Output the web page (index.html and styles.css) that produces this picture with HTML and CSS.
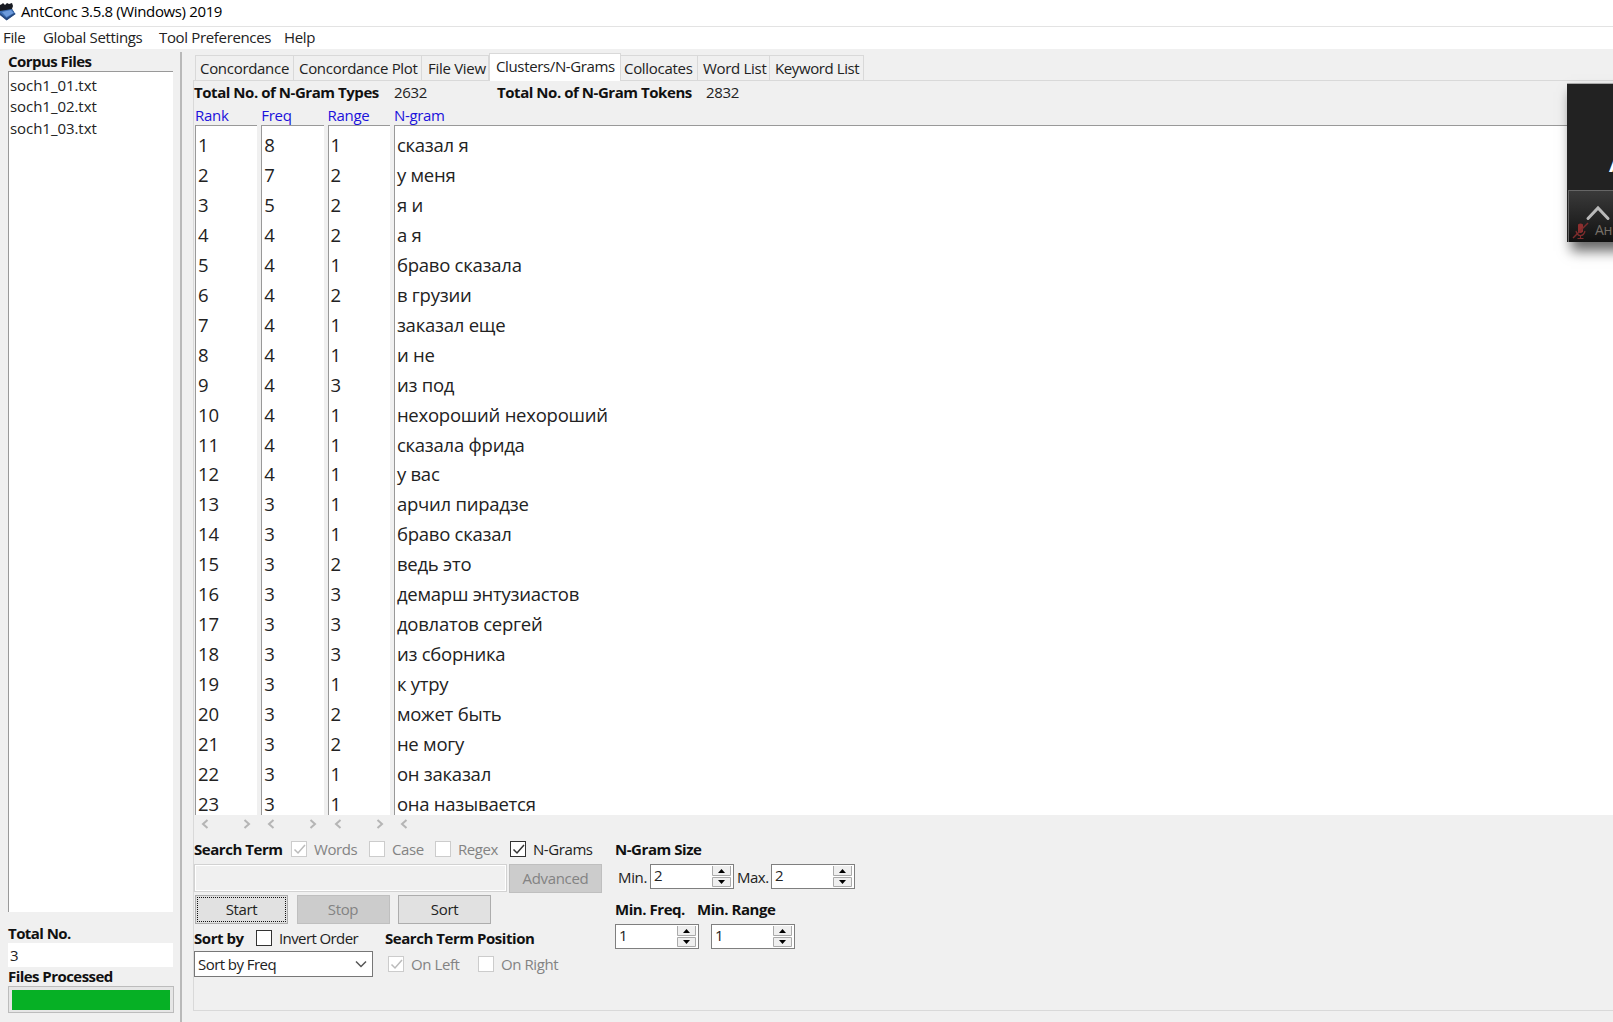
FILE: index.html
```
<!DOCTYPE html>
<html lang="en">
<head>
<meta charset="utf-8">
<title>AntConc 3.5.8 (Windows) 2019</title>
<link rel="stylesheet" href="styles.css">
</head>
<body>
<header class="titlebar">
  <svg class="app-icon" width="17" height="21" viewBox="0 0 17 21">
    <path d="M0 5l2-1 1-1 2 2 2-2 2 1 3-1 1 3-1 3 2 3-6 5L0 14z" fill="#181b22"/>
    <path d="M0 11l12-2 3.500 5-8.500 6L0 15z" fill="#3d6fb5"/>
    <path d="M2 12l9-2 2.500 3-7 4z" fill="#6d9bdc"/>
    <path d="M0 15l6.500 5.500 9-6.500-1-1-8 5L0 13z" fill="#27497f"/>
  </svg>
  <span class="title">AntConc 3.5.8 (Windows) 2019</span>
</header>
<nav class="menubar"><span class="m1">File</span><span class="m2">Global Settings</span><span class="m3">Tool Preferences</span><span class="m4">Help</span></nav>
<div class="workspace">
  <aside class="sidebar">
    <b class="label">Corpus Files</b>
    <div class="files"><span>soch1_01.txt</span><span>soch1_02.txt</span><span>soch1_03.txt</span></div>
    <b class="label total">Total No.</b>
    <div class="count">3</div>
    <b class="label processed">Files Processed</b>
    <div class="progress"><div class="bar"></div></div>
  </aside>
  <main class="main">
    <div class="tabs">
      <div class="tab t1">Concordance</div><div class="tab t2">Concordance Plot</div><div class="tab t3">File View</div><div class="tab active">Clusters/N-Grams</div><div class="tab t5">Collocates</div><div class="tab t6">Word List</div><div class="tab t7">Keyword List</div>
    </div>
    <section class="pane">
      <div class="stats"><b class="types">Total No. of N-Gram Types</b><span class="num">2632</span><b class="tokens">Total No. of N-Gram Tokens</b><span>2832</span></div>
      <div class="table">
        <div class="col"><div class="head">Rank</div><div class="list num-list"><span>1</span><span>2</span><span>3</span><span>4</span><span>5</span><span>6</span><span>7</span><span>8</span><span>9</span><span>10</span><span>11</span><span>12</span><span>13</span><span>14</span><span>15</span><span>16</span><span>17</span><span>18</span><span>19</span><span>20</span><span>21</span><span>22</span><span>23</span></div></div>
        <div class="col"><div class="head">Freq</div><div class="list num-list"><span>8</span><span>7</span><span>5</span><span>4</span><span>4</span><span>4</span><span>4</span><span>4</span><span>4</span><span>4</span><span>4</span><span>4</span><span>3</span><span>3</span><span>3</span><span>3</span><span>3</span><span>3</span><span>3</span><span>3</span><span>3</span><span>3</span><span>3</span></div></div>
        <div class="col"><div class="head">Range</div><div class="list num-list"><span>1</span><span>2</span><span>2</span><span>2</span><span>1</span><span>2</span><span>1</span><span>1</span><span>3</span><span>1</span><span>1</span><span>1</span><span>1</span><span>1</span><span>2</span><span>3</span><span>3</span><span>3</span><span>1</span><span>2</span><span>2</span><span>1</span><span>1</span></div></div>
        <div class="col wide"><div class="head">N-gram</div><div class="list" lang="ru"><span>сказал я</span><span>у меня</span><span>я и</span><span>а я</span><span>браво сказала</span><span>в грузии</span><span>заказал еще</span><span>и не</span><span>из под</span><span>нехороший нехороший</span><span>сказала фрида</span><span>у вас</span><span>арчил пирадзе</span><span>браво сказал</span><span>ведь это</span><span>демарш энтузиастов</span><span>довлатов сергей</span><span>из сборника</span><span>к утру</span><span>может быть</span><span>не могу</span><span>он заказал</span><span>она называется</span></div></div>
      </div>
      <div class="scrolls">
        <div class="scroll"><svg width="8" height="10"><path d="M6.500 1L2 5l4.500 4"/></svg><svg width="8" height="10"><path d="M1.500 1L6 5 1.500 9"/></svg></div>
        <div class="scroll"><svg width="8" height="10"><path d="M6.500 1L2 5l4.500 4"/></svg><svg width="8" height="10"><path d="M1.500 1L6 5 1.500 9"/></svg></div>
        <div class="scroll"><svg width="8" height="10"><path d="M6.500 1L2 5l4.500 4"/></svg><svg width="8" height="10"><path d="M1.500 1L6 5 1.500 9"/></svg></div>
        <div class="scroll"><svg width="8" height="10"><path d="M6.500 1L2 5l4.500 4"/></svg></div>
      </div>
      <div class="controls">
        <div class="search">
          <div class="line terms">
            <b class="b-term">Search Term</b>
            <span class="check off c-words"><i><svg width="15" height="15"><path d="M2.500 7.500l3.500 3.500 7-8"/></svg></i>Words</span>
            <span class="check off c-case"><i></i>Case</span>
            <span class="check off c-regex"><i></i>Regex</span>
            <span class="check"><i><svg width="15" height="15"><path d="M2.500 7.500l3.500 3.500 7-8"/></svg></i>N-Grams</span>
          </div>
          <div class="query"><div class="entry"></div><div class="button off adv">Advanced</div></div>
          <div class="buttons"><div class="button focus">Start</div><div class="button off">Stop</div><div class="button">Sort</div></div>
          <div class="line sortline">
            <b class="b-sort">Sort by</b>
            <span class="check c-invert"><i></i>Invert Order</span>
            <b class="b-pos">Search Term Position</b>
          </div>
          <div class="sortrow">
            <div class="combo"><span>Sort by Freq</span><svg width="12" height="8"><path d="M1 1.500l5 5 5-5"/></svg></div>
            <span class="check off c-left"><i><svg width="15" height="15"><path d="M2.500 7.500l3.500 3.500 7-8"/></svg></i>On Left</span>
            <span class="check off"><i></i>On Right</span>
          </div>
        </div>
        <div class="sizes">
          <div class="line terms"><b class="b-size">N-Gram Size</b></div>
          <div class="minmax">
            <span class="l-min">Min.</span><div class="spin"><span>2</span><svg width="19" height="21"><g><path d="M.5 0v9.500h18V0M.5 11.500h18v9H.5z"/></g><path class="arrow" d="M6 7h7L9.500 3zM6 14h7l-3.500 4z"/></svg></div>
            <span class="l-max">Max.</span><div class="spin"><span>2</span><svg width="19" height="21"><g><path d="M.5 0v9.500h18V0M.5 11.500h18v9H.5z"/></g><path class="arrow" d="M6 7h7L9.500 3zM6 14h7l-3.500 4z"/></svg></div>
          </div>
          <div class="minlabels"><b class="b-mf">Min. Freq.</b><b class="b-mr">Min. Range</b></div>
          <div class="mins">
            <div class="spin"><span>1</span><svg width="19" height="21"><g><path d="M.5 0v9.500h18V0M.5 11.500h18v9H.5z"/></g><path class="arrow" d="M6 7h7L9.500 3zM6 14h7l-3.500 4z"/></svg></div>
            <div class="spin"><span>1</span><svg width="19" height="21"><g><path d="M.5 0v9.500h18V0M.5 11.500h18v9H.5z"/></g><path class="arrow" d="M6 7h7L9.500 3zM6 14h7l-3.500 4z"/></svg></div>
          </div>
        </div>
      </div>
    </section>
  </main>
</div>
<div class="call">
  <div class="speaker">А</div>
  <div class="callbar">
    <svg width="46" height="52" viewBox="0 0 46 52">
      <path d="M19 27.500l10-10.500L39 27.500" fill="none" stroke="#b9b9b9" stroke-width="3" stroke-linecap="round"/>
      <path d="M9 33.500q2.500-2 5 0v7q-2.500 3-5 0z" fill="#8d2f2f"/>
      <path d="M7 40q1 4.500 4.500 4.500T16 40M11.500 44v3M8.500 47.500h6" fill="none" stroke="#7d2c2c" stroke-width="1.200"/>
      <path d="M4 47L19 32" stroke="#7d2c2c" stroke-width="1.500"/>
    </svg>
    <span class="who">Ан</span>
  </div>
</div>
</body>
</html>
```
FILE: styles.css
```
* { box-sizing: border-box; }
body {
  margin: 0; width: 1613px; height: 1022px; overflow: hidden; position: relative;
  background: #f0f0f0; color: #222;
  font: 15px/20px "Open Sans", "Noto Sans", sans-serif; letter-spacing: -0.34px;
  white-space: nowrap;
}
b { font-weight: 700; color: #111; letter-spacing: -0.45px; }
svg { display: block; flex: none; }
.titlebar { height: 27px; background: #fff; border-bottom: 1px solid #e3e3e3; display: flex; }
.app-icon { margin-right: 4px; }
.title { line-height: 23px; color: #000; letter-spacing: -0.36px; }
.menubar { height: 22px; background: #fff; display: flex; line-height: 21px; padding-left: 3px; }
.m1 { width: 40px; }
.m2 { width: 116px; }
.m3 { width: 125px; }
.workspace { display: flex; height: 973px; }

.sidebar { width: 182px; margin-top: 3px; padding: 0 7px 0 8px; border-right: 2px solid #b9b9b9; }
.label { display: block; line-height: 19px; letter-spacing: -0.55px; }
.files { height: 841px; border-top: 1px solid #999; border-left: 1px solid #999; background: #fff; padding: 3px 0 0 1px; display: flex; flex-direction: column; line-height: 21.3px; letter-spacing: -0.05px; }
.total { margin-top: 12px; }
.count { height: 24px; line-height: 24px; background: #fff; padding-left: 2px; }
.processed { height: 19px; }
.progress { height: 27px; width: 166px; border: 1px solid #bcbcbc; background: #e6e6e6; padding: 3px; }
.bar { height: 20px; background: #06b025; }

.main { flex: 1; padding: 4px 0 0 11px; }
.tabs { display: flex; align-items: flex-end; height: 28px; padding-left: 2px; position: relative; z-index: 1; margin-bottom: -1px; }
.tab { height: 26px; border: 1px solid #d9d9d9; border-left-width: 0; padding-left: 5px; line-height: 25px; letter-spacing: -0.3px; }
.t1 { width: 99px; border-left-width: 1px; padding-left: 4px; }
.t2 { width: 128px; }
.t3 { width: 67px; padding-left: 6px; }
.active { width: 132px; height: 28px; background: #fff; border-width: 1px 1px 0; padding-left: 6px; line-height: 25px; letter-spacing: -0.36px; }
.t5 { width: 77px; padding-left: 3px; }
.t6 { width: 72px; }
.t7 { width: 94px; letter-spacing: -0.4px; }
.pane { height: 931px; border: 1px solid #d9d9d9; border-right: 0; }
.stats { display: flex; height: 24px; line-height: 23px; }
.types { width: 200px; }
.num { width: 103px; }
.tokens { width: 209px; }
.table { display: flex; height: 710px; padding-left: 1px; gap: 4px; }
.col { width: 62.300px; flex: none; display: flex; flex-direction: column; }
.wide { flex: 1; }
.head { height: 20px; color: #1b12dc; letter-spacing: -0.3px; }
.list { flex: 1; background: #fff; border-top: 1px solid #999; border-left: 1px solid #999; padding: 4px 0 0 2px; display: flex; flex-direction: column; overflow: hidden; font-size: 18.500px; line-height: 29.960px; letter-spacing: -0.24px; }
.num-list { letter-spacing: 0; }
.list span { flex: none; }
.scrolls { display: flex; height: 18px; padding: 4px 0 0 7px; }
.scroll { width: 66.300px; display: flex; gap: 34px; }
.scroll path { fill: none; stroke: #b5b5b5; stroke-width: 2; }

.controls { display: flex; }
.search { width: 421px; }
.line { display: flex; align-items: center; }
.terms { height: 31px; }
.b-term { width: 97px; }
.check { display: flex; align-items: center; letter-spacing: -0.42px; }
.check i { width: 16px; height: 16px; border: 1px solid #333; background: #fff; margin-right: 7px; flex: none; }
.check i path { fill: none; stroke: #333; stroke-width: 1.500; }
.off { color: #838383; }
.check.off i { border-color: #ccc; }
.check.off i path { stroke: #bbb; }
.c-words { width: 78px; }
.c-case { width: 66px; }
.c-regex { width: 75px; }
.query { display: flex; gap: 2px; height: 31px; }
.entry { width: 313px; height: 28px; border: 1px solid #d2d2d2; box-shadow: inset 0 0 0 1px #fff; }
.button { width: 93px; height: 29px; line-height: 27px; border: 1px solid #adadad; background: #e1e1e1; text-align: center; }
.button.off { background: #ccc; border-color: #bfbfbf; }
.buttons { display: flex; gap: 8.500px; padding-left: 1px; height: 29px; }
.focus { outline: 1px dotted #111; outline-offset: -3px; }
.sortline { height: 27px; }
.b-sort { width: 62px; }
.c-invert { width: 129px; letter-spacing: -0.6px; }
.sortrow { display: flex; align-items: center; }
.combo { width: 179px; height: 26px; border: 1px solid #777; background: #fff; display: flex; align-items: center; justify-content: space-between; padding: 0 5px 0 3px; margin-right: 15px; letter-spacing: -0.55px; }
.combo path { fill: none; stroke: #555; stroke-width: 1.500; }
.c-left { width: 90px; }
.minmax { display: flex; height: 30px; line-height: 26px; padding-left: 3px; }
.l-min { width: 32px; }
.l-max { width: 34px; margin-left: 3px; letter-spacing: -0.5px; }
.spin { width: 84px; height: 25px; border: 1px solid #7f7f7f; background: #fff; display: flex; justify-content: space-between; padding: 1px 2px 0 3px; line-height: 18px; }
.spin g { fill: #efefef; stroke: #aaa; }
.arrow { fill: #000; }
.minlabels { display: flex; height: 30px; line-height: 30px; }
.b-mf { width: 82px; }
.mins { display: flex; gap: 12px; }

.call { position: absolute; left: 1567px; top: 83px; width: 60px; height: 159px; background: #222; box-shadow: 4px 9px 12px rgba(0,0,0,.6); border-top: 1px solid #aaa; }
.speaker { height: 106px; padding: 46px 0 0 42px; font-size: 40px; line-height: 54px; color: #fff; }
.callbar { height: 52px; margin-left: 1px; border: 1px solid #666; border-bottom: 0; background: linear-gradient(#3a3a3a, #111); position: relative; }
.who { position: absolute; left: 26px; top: 29px; font-size: 14px; color: #777068; }
```
